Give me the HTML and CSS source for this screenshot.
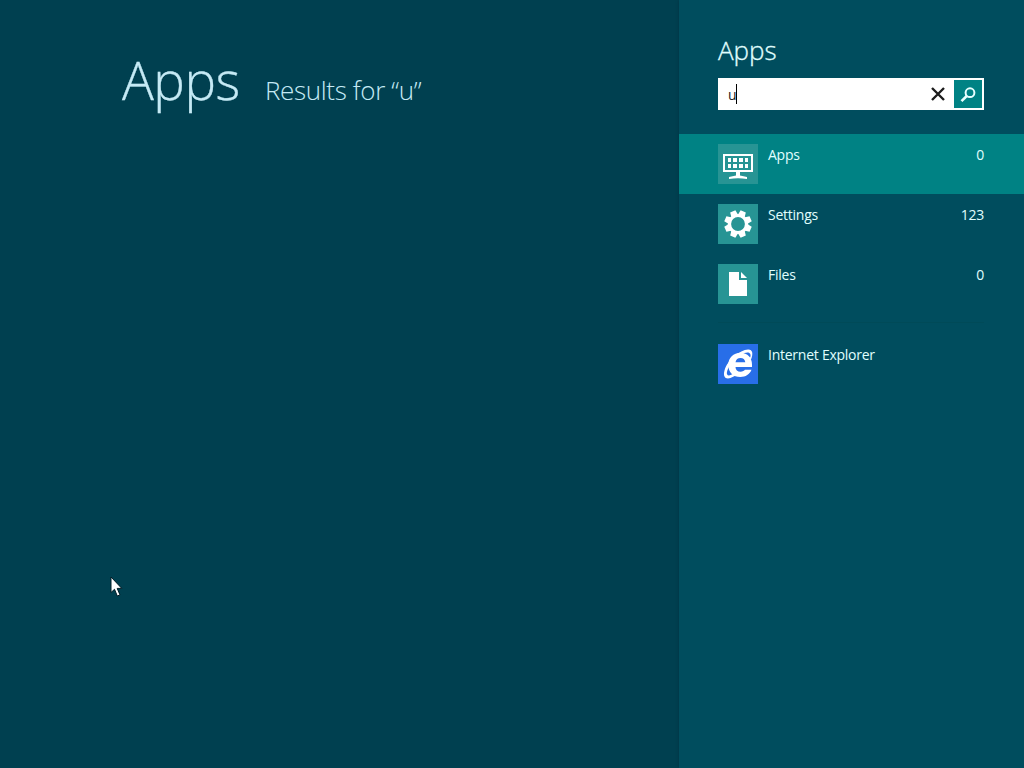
FILE: index.html
```html
<!DOCTYPE html>
<html lang="en">
<head>
    <meta charset="UTF-8">
    <meta name="viewport" content="width=device-width, initial-scale=1.0">
    <title>Apps</title>
    <link rel="stylesheet" href="styles.css">
</head>
<body>
    <main class="results">
        <h1>Apps</h1>
        <p class="results-for">Results for “u”</p>
    </main>

    <aside class="search-pane">
        <h2>Apps</h2>
        <div class="search-box">
            <span class="query">u</span>
            <span class="caret"></span>
            <svg class="clear" width="14" height="14" viewBox="0 0 14 14">
                <path d="M1 1L13 13M13 1L1 13" stroke="#1c1c1c" stroke-width="2.4"/>
            </svg>
            <div class="search-button">
                <svg width="28" height="28" viewBox="0 0 28 28" fill="none" stroke="#e8ffff">
                    <circle cx="16" cy="12.7" r="4.4" stroke-width="2"/>
                    <path d="M12.7 16L7.5 21.2" stroke-width="2.6"/>
                </svg>
            </div>
        </div>

        <ul class="scopes">
            <li class="selected">
                <svg class="tile" width="40" height="40" viewBox="0 0 40 40" fill="#fff">
                    <path fill-rule="evenodd" d="M5 10H35V28H5ZM7 12V26H33V12Z"/>
                    <path d="M10 14h3v4h-3zM15 14h4v4h-4zM21 14h4v4h-4zM27 14h3v4h-3zM10 20h3v4h-3zM15 20h4v4h-4zM21 20h4v4h-4zM27 20h3v4h-3z"/>
                    <path d="M18 28H22V31.500L29 33V35Q20 33.400 11 35V33L18 31.500Z"/>
                </svg>
                <span>Apps</span>
                <span class="count">0</span>
            </li>
            <li>
                <svg class="tile" width="40" height="40" viewBox="0 0 40 40">
                    <g fill="#fff" transform="rotate(22.5 20 20)">
                        <path id="tooth" d="M16.500 11L17.200 6.300H22.800L23.500 11V29L22.800 33.700H17.200L16.500 29Z"/>
                        <use href="#tooth" transform="rotate(45 20 20)"/>
                        <use href="#tooth" transform="rotate(90 20 20)"/>
                        <use href="#tooth" transform="rotate(135 20 20)"/>
                    </g>
                    <circle cx="20" cy="20" r="8.500" fill="#279494" stroke="#fff" stroke-width="3.200"/>
                </svg>
                <span>Settings</span>
                <span class="count">123</span>
            </li>
            <li>
                <svg class="tile" width="40" height="40" viewBox="0 0 40 40" fill="#fff">
                    <path d="M11 8H21V16H29V32H11Z"/>
                    <path d="M23 8L29 14H23Z"/>
                </svg>
                <span>Files</span>
                <span class="count">0</span>
            </li>
        </ul>

        <ul class="app-list">
            <li>
                <svg class="tile ie" width="40" height="40" viewBox="0 0 40 40" fill="#fff">
                    <path fill-rule="evenodd" d="M34 23H17.500C17.500 26 19.500 27.700 22.500 27.700C24.700 27.700 26.200 26.900 26.900 25.800H33.500C31.700 30.400 27.700 33 22.300 33C15.200 33 10.300 28.300 10.300 21C10.300 13.700 15.400 8.700 22.500 8.700C29.800 8.700 34 13.800 34 20.500ZM17.500 18.300H27.300C27 15.500 25.200 14 22.500 14C19.800 14 17.900 15.500 17.500 18.300Z"/>
                    <path d="M33 15.500C35.500 9.500 34.500 5.200 30 5.500C22 6 9.500 15.500 6.500 26.500C4.800 32.600 7.300 35.600 12.500 34C14.500 33.400 17 32 18.800 30.800L16.300 28.700C13 31.300 10.200 32.300 9.200 30.600C7.900 28.300 10.800 22 15.500 16.500C20.500 10.700 28 7.500 31 8.700C33 9.600 33 12 31.700 14.500Z"/>
                </svg>
                <span>Internet Explorer</span>
            </li>
        </ul>
    </aside>

    <svg class="cursor" width="14" height="22" viewBox="0 0 14 22">
        <path d="M1 1V16.500L4.500 13.300L7.300 20L10 18.900L7.200 12.400H11.800Z" fill="#fff" stroke="#001c26"/>
    </svg>
</body>
</html>
```

FILE: styles.css
```css
body {
    display: flex;
    position: relative;
    margin: 0;
    height: 768px;
    overflow: hidden;
    background-color: #004050;
    color: #e0ffff;
    font-family: "Open Sans", "Noto Sans", sans-serif;
}
h1, h2, p, ul {
    margin: 0;
    padding: 0;
    font-weight: 300;
}
ul {
    list-style: none;
}
.results {
    display: flex;
    align-items: baseline;
    box-sizing: border-box;
    width: 679px;
    padding: 42px 0 0 122px;
    color: #c5eaf5;
}
.results h1 {
    width: 143px;
    font-size: 53px;
    line-height: 76px;
    letter-spacing: -0.5px;
    -webkit-text-stroke: 0.3px;
}
.results-for {
    font-size: 26px;
    letter-spacing: -0.35px;
    white-space: nowrap;
}
.search-pane {
    box-sizing: border-box;
    width: 345px;
    padding-top: 31px;
    background-color: #004d5e;
    box-shadow: 0 0 3px #003442;
}
.search-pane h2 {
    margin-left: 39px;
    font-size: 26px;
    line-height: 38px;
    -webkit-text-stroke: 0.3px;
}
.search-box {
    display: flex;
    align-items: center;
    box-sizing: border-box;
    width: 266px;
    height: 32px;
    margin: 9px 0 24px 39px;
    padding: 2px 2px 2px 10px;
    background-color: #fff;
}
.query {
    width: 8px;
    color: #222;
    font-size: 14px;
}
.caret {
    width: 1px;
    height: 20px;
    background-color: #000;
}
.clear {
    margin-left: auto;
    margin-right: 9px;
}
.search-button {
    width: 28px;
    height: 28px;
    background-color: #008284;
}
.scopes li, .app-list li {
    display: flex;
    box-sizing: border-box;
    height: 60px;
    padding: 10px 40px 10px 39px;
    font-size: 14px;
    font-weight: 400;
    line-height: 22px;
    letter-spacing: -0.25px;
    white-space: nowrap;
}
.scopes .selected {
    background-color: #008284;
}
.tile {
    flex: none;
    margin-right: 10px;
    background-color: #279494;
}
.ie {
    background-color: #286ee8;
}
.count {
    margin-left: auto;
}
.app-list {
    margin-top: 8px;
}
.app-list::before {
    content: "";
    display: block;
    height: 1px;
    margin: 0 40px 11px 39px;
    background-color: #004a58;
}
.cursor {
    position: absolute;
    left: 110px;
    top: 576px;
}
```
